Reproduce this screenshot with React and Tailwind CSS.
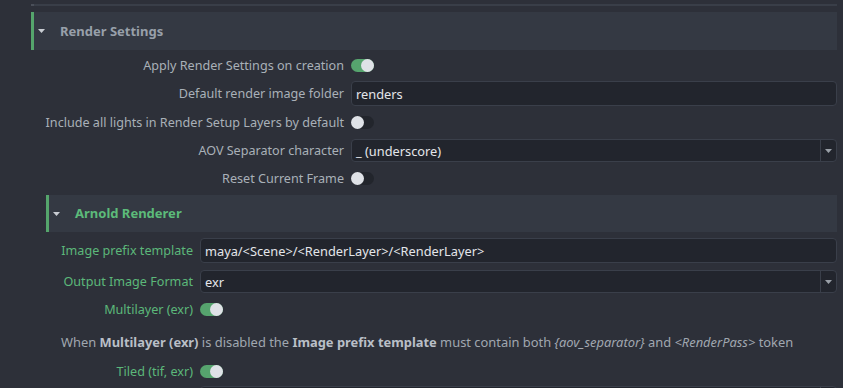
import React from 'react';

function Toggle({ on }) {
  return (
    <div className={`relative h-[13px] w-[23px] rounded-full ${on ? 'bg-[#56a46e]' : 'bg-[#22252c]'}`}>
      <div className={`absolute top-0 h-[13px] w-[13px] rounded-full bg-[#dfe2e7] ${on ? 'right-0' : 'left-0'}`} />
    </div>
  );
}

function TextInput({ value }) {
  return (
    <div className="flex h-[25px] flex-1 items-center rounded-[4px] border border-[#3a3f4a] bg-[#22252d] px-[4px] pt-[1px] text-[12.8px] text-[#e4e6ea]">
      {value}
    </div>
  );
}

function Dropdown({ value }) {
  return (
    <div className="flex h-[23px] flex-1 items-center rounded-[4px] border border-[#3a3f4a] bg-[#22252d] text-[12.8px] text-[#e4e6ea]">
      <div className="flex-1 px-[4px] pt-[1px]">{value}</div>
      <div className="flex h-full w-[16px] items-center justify-center border-l border-[#3a3f4a]">
        <svg width="7" height="4" viewBox="0 0 7 4">
          <path d="M0 0 L7 0 L3.5 4 Z" fill="#9aa0a8" />
        </svg>
      </div>
    </div>
  );
}

function Header({ title, green }) {
  return (
    <div className="flex h-full items-stretch bg-[#343943]">
      <div className="w-[3px] bg-[#55a56c]" />
      <div className="flex items-center pl-[4px]">
        <svg width="7" height="4" viewBox="0 0 7 4">
          <path d="M0 0 L7 0 L3.5 4 Z" fill="#c9cdd3" />
        </svg>
      </div>
      <div className={`flex items-center pl-[15px] text-[13px] font-bold ${green ? 'text-[#5cbb7a]' : 'text-[#98a0aa]'}`}>
        {title}
      </div>
    </div>
  );
}

function Row({ label, labelWidth, height, green, children }) {
  return (
    <div className="flex items-center gap-[7px]" style={{ height }}>
      <div
        className={`shrink-0 pt-[2px] text-right whitespace-nowrap ${green ? 'text-[#5cb87a]' : 'text-[#a9b0b8]'}`}
        style={{ width: labelWidth }}
      >
        {label}
      </div>
      {children}
    </div>
  );
}

export default function App() {
  return (
    <div
      className="h-[388px] w-[843px] overflow-hidden bg-[#2d3039] text-[12.6px] leading-none"
      style={{ fontFamily: '"Noto Sans", "Open Sans", sans-serif' }}
    >
      <div className="pl-[31px] pr-[6px] pt-[4px]">
        <div className="flex h-[2px]">
          <div className="w-[3px] bg-[#4a4f59]" />
          <div className="flex-1 bg-[#393e48]" />
        </div>
        <div className="mt-[6px] h-[38px]">
          <Header title="Render Settings" />
        </div>

        <Row label="Apply Render Settings on creation" labelWidth={313} height={31}>
          <Toggle on />
        </Row>
        <Row label="Default render image folder" labelWidth={313} height={25}>
          <TextInput value="renders" />
        </Row>
        <Row label="Include all lights in Render Setup Layers by default" labelWidth={313} height={33}>
          <Toggle />
        </Row>
        <Row label="AOV Separator character" labelWidth={313} height={23}>
          <Dropdown value="_ (underscore)" />
        </Row>
        <Row label="Reset Current Frame" labelWidth={313} height={33}>
          <Toggle />
        </Row>

        <div className="pl-[15px]">
          <div className="h-[37px]">
            <Header title="Arnold Renderer" green />
          </div>
          <div className="flex flex-col">
            <div className="mt-[6px]">
              <Row label="Image prefix template" labelWidth={147} height={25} green>
                <TextInput value="maya/<Scene>/<RenderLayer>/<RenderLayer>" />
              </Row>
            </div>
            <div className="mt-[7px]">
              <Row label="Output Image Format" labelWidth={147} height={23} green>
                <Dropdown value="exr" />
              </Row>
            </div>
            <Row label="Multilayer (exr)" labelWidth={147} height={33} green>
              <Toggle on />
            </Row>
            <div className="flex h-[30px] items-center pl-[15px] pt-[2px] text-[12.9px] text-[#a0a7b0] whitespace-nowrap">
              <span>
                When <b className="text-[#b9bfc7]">Multilayer (exr)</b> is disabled the{' '}
                <b className="text-[#b9bfc7]">Image prefix template</b> must contain both{' '}
                <i>{'{aov_separator}'}</i> and <i>{'<RenderPass>'}</i> token
              </span>
            </div>
            <Row label="Tiled (tif, exr)" labelWidth={147} height={30} green>
              <Toggle on />
            </Row>
            <Row label="" labelWidth={147} height={23}>
              <Dropdown value="" />
            </Row>
          </div>
        </div>
      </div>
    </div>
  );
}
